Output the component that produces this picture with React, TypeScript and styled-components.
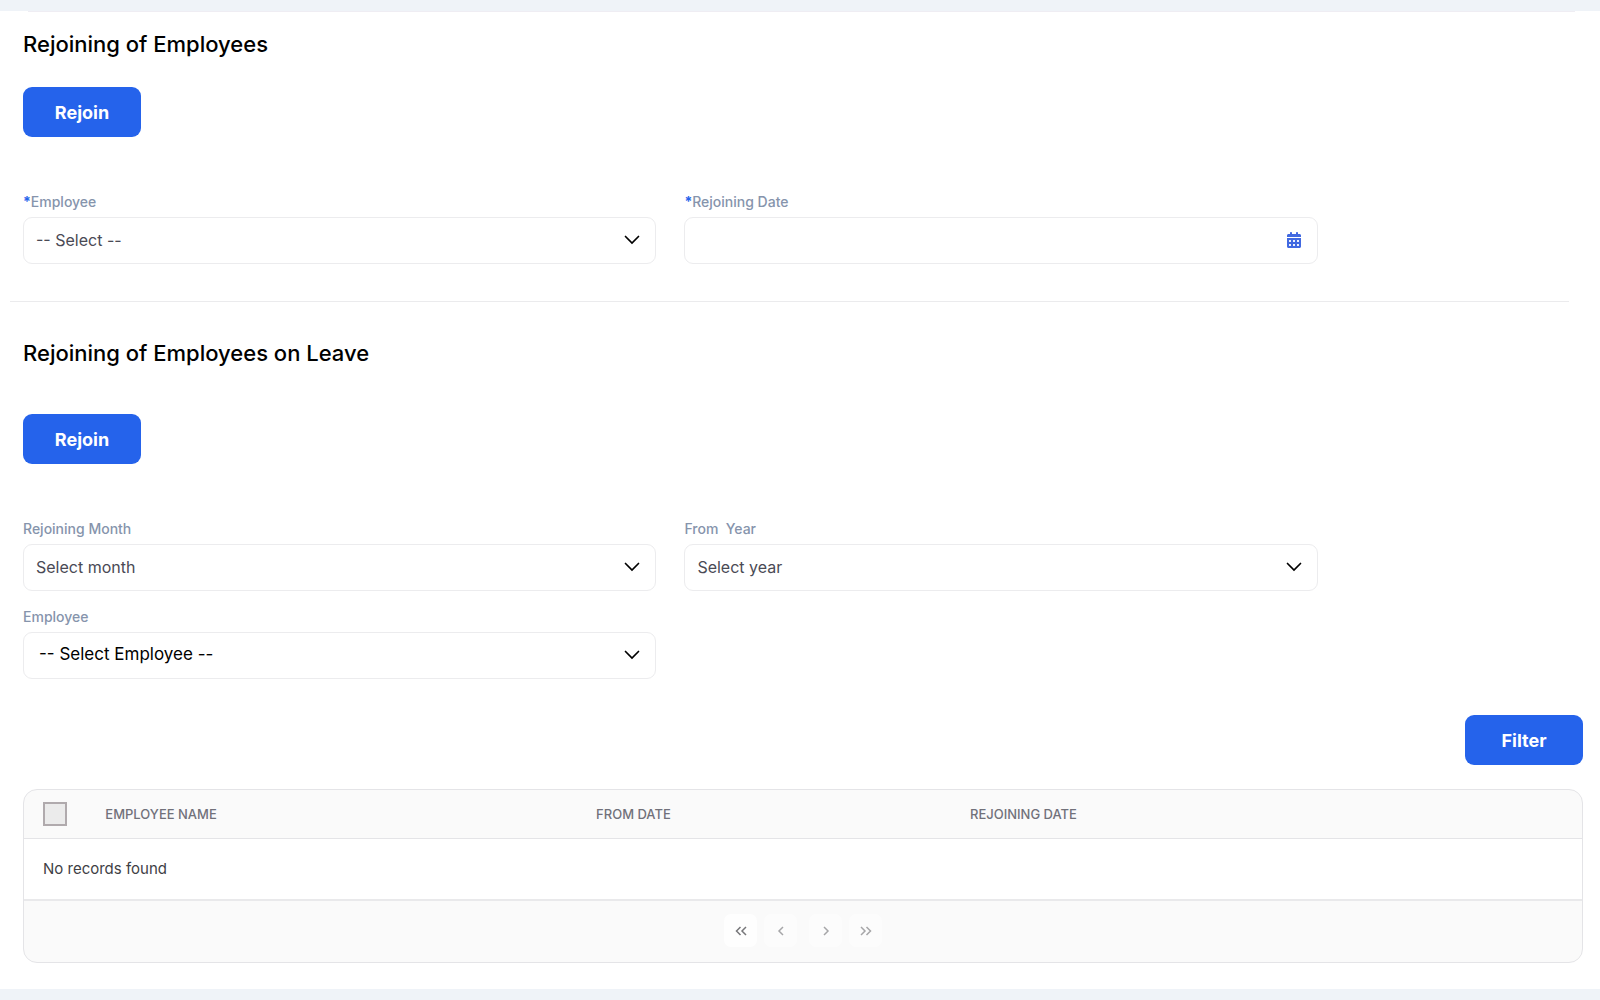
import React from "react";
import styled, { createGlobalStyle } from "styled-components";
import { FaCalendarDays } from "react-icons/fa6";

const GlobalStyle = createGlobalStyle`
  *, *::before, *::after { box-sizing: border-box; }
  body {
    margin: 0;
    background: #eff3f8;
    font-family: Inter, "Liberation Sans", sans-serif;
  }
  button, input, select { font-family: inherit; }
`;

const Page = styled.div`
  padding: 11px 0;
`;

const Panel = styled.main`
  background: #fff;
  padding: 0 17px 26px 23px;
`;

const TopRule = styled.div`
  height: 1px;
  margin: 0 8px 16px 5px;
  background: #efedf3;
`;

const Heading = styled.h2`
  margin: 0;
  font-size: 22px;
  line-height: 32px;
  font-weight: 500;
  color: #000;
`;

const Toolbar = styled.div<{ $top: number; $bottom: number; $end?: boolean }>`
  display: flex;
  justify-content: ${(p) => (p.$end ? "flex-end" : "flex-start")};
  padding: ${(p) => p.$top}px 0 ${(p) => p.$bottom}px;
`;

const PrimaryButton = styled.button`
  min-width: 118px;
  height: 50px;
  padding: 0 24px;
  border: 0;
  border-radius: 9px;
  background: #2563eb;
  color: #fff;
  font-size: 18px;
  font-weight: 700;
  cursor: pointer;
`;

const Fields = styled.div`
  display: grid;
  grid-template-columns: 1fr 1fr;
  gap: 16px 28px;
  width: 83%;
`;

const Field = styled.div`
  display: flex;
  flex-direction: column;
  gap: 5px;
`;

const Label = styled.label`
  font-size: 14px;
  line-height: 20px;
  font-weight: 500;
  color: #8694ac;
  white-space: pre;
`;

const Star = styled.span`
  color: #2563eb;
  font-weight: 700;
`;

const ControlBox = styled.div`
  position: relative;
  height: 47px;
  color: #000;
`;

const Select = styled.select<{ $strong?: boolean }>`
  appearance: none;
  width: 100%;
  height: 100%;
  padding: ${(p) => (p.$strong ? "0 44px 4px 15px" : "0 44px 2px 12px")};
  border: 1px solid #ececee;
  border-radius: 9px;
  background: #fff;
  color: ${(p) => (p.$strong ? "#000" : "#4a4a55")};
  font-size: ${(p) => (p.$strong ? 17 : 16)}px;
`;

const DateInput = styled.input`
  width: 100%;
  height: 100%;
  padding: 0 44px 0 12px;
  border: 1px solid #ececee;
  border-radius: 9px;
  background: #fff;
  font-size: 16px;
`;

const Chevron = styled.svg`
  position: absolute;
  top: 18px;
  right: 16px;
  width: 16px;
  height: 10px;
  pointer-events: none;
`;

const CalendarButton = styled.button`
  position: absolute;
  top: 15px;
  right: 16px;
  display: flex;
  padding: 0;
  border: 0;
  background: none;
  color: #4169e1;
  font-size: 16px;
  cursor: pointer;
`;

const Divider = styled.hr`
  height: 1px;
  margin: 37px 14px 35px -13px;
  border: 0;
  background: #ebebed;
`;

const TableCard = styled.div`
  border: 1px solid #e4e4e7;
  border-radius: 14px;
  background: #fafafa;
  overflow: hidden;
`;

const Table = styled.table`
  width: 100%;
  table-layout: fixed;
  border-collapse: collapse;
`;

const HeadCell = styled.th<{ $width?: string }>`
  width: ${(p) => p.$width ?? "auto"};
  height: 48px;
  padding: 0 19px;
  border-bottom: 1px solid #e4e4e7;
  text-align: left;
  text-transform: uppercase;
  font-size: 13px;
  font-weight: 500;
  color: #71717a;
`;

const EmptyCell = styled.td`
  height: 62px;
  padding: 0 19px;
  border-bottom: 2px solid #e9e9eb;
  background: #fff;
  font-size: 15px;
  color: #3f3f46;
`;

const Checkbox = styled.input`
  appearance: none;
  display: block;
  width: 24px;
  height: 24px;
  margin: 0;
  border: 2px solid #b0aaad;
  background: #ebebeb;
`;

const Pager = styled.nav`
  display: flex;
  justify-content: center;
  gap: 12px;
  padding: 13px 0 15px;
`;

const PagerGroup = styled.div`
  display: flex;
  gap: 7px;
`;

const PageButton = styled.button<{ $active?: boolean }>`
  display: flex;
  align-items: center;
  justify-content: center;
  width: 33px;
  height: 33px;
  padding: 0;
  border: 0;
  border-radius: 7px;
  background: ${(p) => (p.$active ? "#fefefe" : "#fcfcfc")};
  color: ${(p) => (p.$active ? "#77777a" : "#a6a6a8")};
`;

function Down() {
  return (
    <Chevron viewBox="0 0 16 10" fill="none" stroke="currentColor" strokeWidth="1.7" aria-hidden="true">
      <path d="M1.5 1.5 8 8l6.5-6.5" strokeLinecap="round" />
    </Chevron>
  );
}

function Arrow({ d }: { d: string }) {
  return (
    <svg width="14" height="10" viewBox="0 0 14 10" fill="none" stroke="currentColor" strokeWidth="1.5" aria-hidden="true">
      <path d={d} />
    </svg>
  );
}

interface SelectFieldProps {
  id: string;
  label: string;
  placeholder: string;
  required?: boolean;
  strong?: boolean;
}

function SelectField({ id, label, placeholder, required, strong }: SelectFieldProps) {
  return (
    <Field>
      <Label htmlFor={id}>
        {required && <Star>*</Star>}
        {label}
      </Label>
      <ControlBox>
        <Select id={id} $strong={strong} defaultValue="">
          <option value="">{placeholder}</option>
        </Select>
        <Down />
      </ControlBox>
    </Field>
  );
}

export default function App() {
  return (
    <Page>
      <GlobalStyle />
      <Panel>
        <TopRule />
        <section>
          <Heading>Rejoining of Employees</Heading>
          <Toolbar $top={27} $bottom={55}>
            <PrimaryButton type="button">Rejoin</PrimaryButton>
          </Toolbar>
          <Fields>
            <SelectField id="employee" label="Employee" placeholder="-- Select --" required />
            <Field>
              <Label htmlFor="rejoin-date">
                <Star>*</Star>Rejoining Date
              </Label>
              <ControlBox>
                <DateInput id="rejoin-date" type="text" />
                <CalendarButton type="button" aria-label="Open calendar">
                  <FaCalendarDays />
                </CalendarButton>
              </ControlBox>
            </Field>
          </Fields>
        </section>
        <Divider />
        <section>
          <Heading>Rejoining of Employees on Leave</Heading>
          <Toolbar $top={45} $bottom={55}>
            <PrimaryButton type="button">Rejoin</PrimaryButton>
          </Toolbar>
          <Fields>
            <SelectField id="month" label="Rejoining Month" placeholder="Select month" />
            <SelectField id="year" label="From  Year" placeholder="Select year" />
            <SelectField id="leave-employee" label="Employee" placeholder="-- Select Employee --" strong />
          </Fields>
          <Toolbar $top={36} $bottom={24} $end>
            <PrimaryButton type="button">Filter</PrimaryButton>
          </Toolbar>
          <TableCard>
            <Table>
              <thead>
                <tr>
                  <HeadCell $width="4%">
                    <Checkbox type="checkbox" aria-label="Select all" />
                  </HeadCell>
                  <HeadCell $width="31.5%">Employee Name</HeadCell>
                  <HeadCell $width="24%">From Date</HeadCell>
                  <HeadCell>Rejoining Date</HeadCell>
                </tr>
              </thead>
              <tbody>
                <tr>
                  <EmptyCell colSpan={4}>No records found</EmptyCell>
                </tr>
              </tbody>
            </Table>
            <Pager aria-label="Pagination">
              <PagerGroup>
                <PageButton type="button" $active aria-label="First page">
                  <Arrow d="M6.5 1 2.5 5l4 4M12 1 8 5l4 4" />
                </PageButton>
                <PageButton type="button" aria-label="Previous page">
                  <Arrow d="M9 1 5 5l4 4" />
                </PageButton>
              </PagerGroup>
              <PagerGroup>
                <PageButton type="button" aria-label="Next page">
                  <Arrow d="M5 1l4 4-4 4" />
                </PageButton>
                <PageButton type="button" aria-label="Last page">
                  <Arrow d="M2 1l4 4-4 4M7.5 1l4 4-4 4" />
                </PageButton>
              </PagerGroup>
            </Pager>
          </TableCard>
        </section>
      </Panel>
    </Page>
  );
}
